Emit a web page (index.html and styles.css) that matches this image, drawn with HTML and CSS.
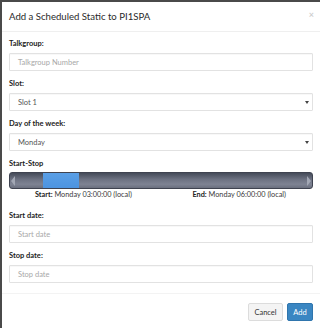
FILE: index.html
```html
<!DOCTYPE html>
<html>
<head>
<meta charset="utf-8">
<link rel="stylesheet" href="styles.css">
</head>
<body>
<div class="modal">
  <div class="modal-header">
    <h4 class="title">Add a Scheduled Static to PI1SPA</h4>
    <span class="close">×</span>
  </div>
  <div class="modal-body">
    <div class="group">
      <label class="lbl">Talkgroup:</label>
      <div class="field placeholder">Talkgroup Number</div>
    </div>
    <div class="group">
      <label class="lbl">Slot:</label>
      <div class="field select">Slot 1<span class="caret"></span></div>
    </div>
    <div class="group">
      <label class="lbl">Day of the week:</label>
      <div class="field select">Monday<span class="caret"></span></div>
    </div>
    <div class="group slider-group">
      <label class="lbl">Start-Stop</label>
      <div class="slider">
        <span class="arrow left"></span>
        <div class="track"><div class="handle"></div></div>
        <span class="arrow right"></span>
      </div>
      <div class="range-info">
        <span><b>Start:</b> Monday 03:00:00 (local)</span>
        <span><b>End:</b> Monday 06:00:00 (local)</span>
      </div>
    </div>
    <div class="group">
      <label class="lbl">Start date:</label>
      <div class="field placeholder">Start date</div>
    </div>
    <div class="group">
      <label class="lbl">Stop date:</label>
      <div class="field placeholder">Stop date</div>
    </div>
  </div>
  <div class="modal-footer">
    <button class="btn btn-default">Cancel</button>
    <button class="btn btn-primary">Add</button>
  </div>
</div>
</body>
</html>
```
FILE: styles.css
```css
html, body {
  margin: 0;
  padding: 0;
  background: #4a4a4a;
  width: 320px;
  height: 328px;
  overflow: hidden;
}
body {
  font-family: "Lato", "Open Sans", sans-serif;
  color: #333;
}
.modal {
  margin: 2px 0 0 2px;
  background: #fff;
  height: 326px;
  display: flex;
  flex-direction: column;
}
.modal-header {
  display: flex;
  justify-content: space-between;
  align-items: center;
  height: 29px;
  padding: 0 6px 0 7px;
  border-bottom: 1px solid #efefef;
}
.title {
  margin: 0;
  font-size: 9.6px;
  line-height: 12px;
  font-weight: normal;
  color: #2a2a2a;
}
.close {
  font-size: 9px;
  line-height: 10px;
  color: #cfcfcf;
  font-weight: bold;
  margin-top: -3px;
}
.modal-body {
  padding: 7px 7px 0 7px;
}
.group {
  margin-bottom: 8px;
}
.lbl {
  display: block;
  font-size: 7.5px;
  font-weight: bold;
  color: #222;
  margin-bottom: 4px;
  line-height: 10px;
}
.field {
  height: 18px;
  border: 1px solid #e2e2e2;
  box-shadow: inset 0 1px 1px rgba(0,0,0,0.03);
  box-sizing: border-box;
  border-radius: 1px;
  font-size: 7.5px;
  padding: 0 8px;
  display: flex;
  align-items: center;
  justify-content: space-between;
  color: #555;
}
.placeholder {
  color: #a8a8a8;
}
.caret {
  width: 0;
  height: 0;
  border-left: 2px solid transparent;
  border-right: 2px solid transparent;
  border-top: 3px solid #444;
  margin-right: -5px;
}
.slider-group .lbl {
  margin-bottom: 3px;
}
.slider {
  height: 17px;
  border-radius: 3px;
  background: linear-gradient(#454b59, #6e7383 45%, #7e8393 75%, #6a6f7e);
  display: flex;
  align-items: center;
  border: 1px solid #3f4350;
  box-sizing: border-box;
}
.track {
  flex: 1;
  align-self: stretch;
  position: relative;
  margin: 0 2px;
}
.handle {
  position: absolute;
  left: 26px;
  width: 36px;
  top: 0;
  bottom: 0;
  background: linear-gradient(#5a9fe6, #4d94e0);
}
.arrow {
  width: 0;
  height: 0;
  border-top: 5px solid transparent;
  border-bottom: 5px solid transparent;
}
.arrow.left {
  border-right: 4px solid #a2a7b4;
  margin-left: 1px;
}
.arrow.right {
  border-left: 4px solid #a2a7b4;
  margin-right: 1px;
}
.range-info {
  display: flex;
  justify-content: space-between;
  font-size: 7.3px;
  line-height: 10px;
  color: #3a3a3a;
  margin-top: 1px;
  padding: 0 27px 0 26px;
  margin-bottom: 11px;
}
.range-info b {
  color: #222;
}
.modal-footer {
  margin-top: auto;
  border-top: 1px solid #f3f3f3;
  padding: 9px 7px 7px;
  display: flex;
  justify-content: flex-end;
  gap: 4px;
}
.btn {
  font-family: inherit;
  font-size: 7.5px;
  height: 18px;
  padding: 0;
  border-radius: 2px;
  border: 1px solid #dcdcdc;
}
.btn-default {
  background: #f4f4f4;
  color: #333;
  width: 35px;
}
.btn-primary {
  background: #3a86c2;
  border-color: #2f75ad;
  color: #fff;
  width: 26px;
}
```
